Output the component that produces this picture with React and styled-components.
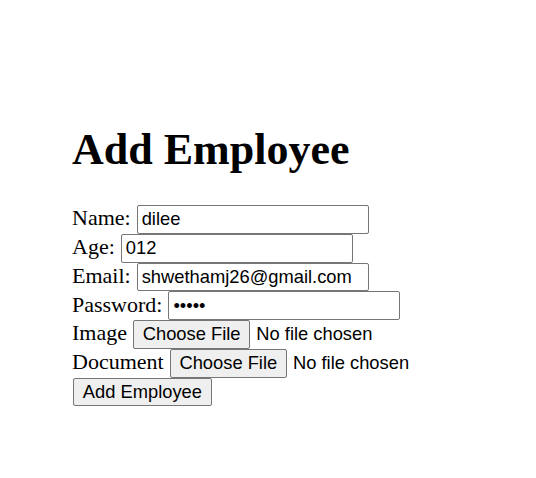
import React, { useState } from "react";
import styled, { createGlobalStyle } from "styled-components";

const GlobalStyle = createGlobalStyle`
    body {
        margin: 0;
        background: #fff;
        color: #000;
    }
`

const App = () => {
    const [name, setName] = useState('dilee');
    const [age, setAge] = useState('012');
    const [email, setEmail] = useState('shwethamj26@gmail.com');
    const [password, setPassword] = useState('12345');

    //Form submit does nothing here
    const onFormSubmit = (e) => {
        e.preventDefault();
    }

    return (
        <Page>
            <GlobalStyle />
            <Title>Add Employee</Title>
            <EmployeeForm onSubmit={onFormSubmit}>
                <Row>
                    <Label>Name:</Label>
                    <TextInput type="text" value={name} onChange={(e) => setName(e.target.value)} />
                </Row>
                <Row>
                    <Label>Age:</Label>
                    <TextInput type="text" value={age} onChange={(e) => setAge(e.target.value)} />
                </Row>
                <Row>
                    <Label>Email:</Label>
                    <TextInput type="text" value={email} onChange={(e) => setEmail(e.target.value)} />
                </Row>
                <Row>
                    <Label>Password:</Label>
                    <TextInput type="password" value={password} onChange={(e) => setPassword(e.target.value)} />
                </Row>
                <Row>
                    <Label>Image</Label>
                    <FilePicker>
                        <FileButton type="button">Choose File</FileButton>
                        <FileStatus>No file chosen</FileStatus>
                    </FilePicker>
                </Row>
                <Row>
                    <Label>Document</Label>
                    <FilePicker>
                        <FileButton type="button">Choose File</FileButton>
                        <FileStatus>No file chosen</FileStatus>
                    </FilePicker>
                </Row>
                <Row>
                    <SubmitButton type="submit">Add Employee</SubmitButton>
                </Row>
            </EmployeeForm>
        </Page>
    )
}

export default App;

const Page = styled.div`
    padding: 124px 0 0 72px;
    font-family: "Liberation Serif", "Times New Roman", serif;
`

const Title = styled.h1`
    font-size: 44px;
    font-weight: 700;
    line-height: normal;
    margin: 0 0 30px;
`

const EmployeeForm = styled.form`
    display: flex;
    flex-direction: column;
    align-items: flex-start;
`

const Row = styled.div`
    display: flex;
    align-items: baseline;
    gap: 6px;
    height: 28.75px;
`

const Label = styled.span`
    font-size: 22px;
    line-height: normal;
`

const TextInput = styled.input`
    box-sizing: border-box;
    width: 232px;
    height: 28.75px;
    margin: 0;
    padding: 0 4px;
    border: 1px solid #767676;
    border-radius: 2px;
    font-family: "Liberation Sans", Arial, sans-serif;
    font-size: 18.33px;
    color: #000;
    background: #fff;
`

const FilePicker = styled.span`
    display: inline-flex;
    align-items: baseline;
    gap: 6px;
    font-family: "Liberation Sans", Arial, sans-serif;
    font-size: 18.33px;
`

const FileButton = styled.button`
    box-sizing: border-box;
    height: 28.75px;
    margin: 0;
    padding: 0 8.75px;
    border: 1px solid #767676;
    border-radius: 2px;
    background: #efefef;
    color: #000;
    font-family: "Liberation Sans", Arial, sans-serif;
    font-size: 18.33px;
`

const FileStatus = styled.span`
    color: #000;
`

const SubmitButton = styled(FileButton)`
    margin-left: 1px;
`
